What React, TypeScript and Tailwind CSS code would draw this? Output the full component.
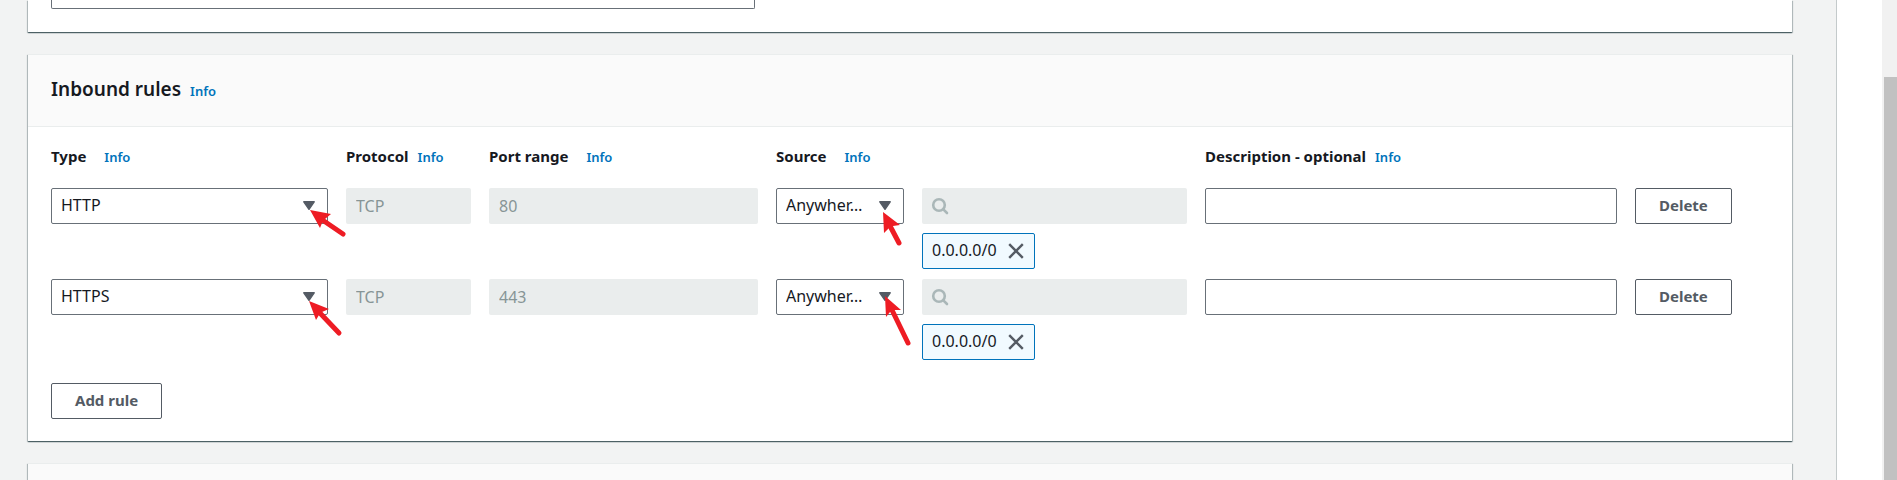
import type { ReactNode } from "react";

type Arrow = { head: string; shaft: string };

type Rule = {
  id: string;
  type: string;
  protocol: string;
  port: string;
  source: string;
  cidr: string;
  typeArrow: Arrow;
  sourceArrow: Arrow;
};

const rules: Rule[] = [
  {
    id: "rule-1",
    type: "HTTP",
    protocol: "TCP",
    port: "80",
    source: "Anywher…",
    cidr: "0.0.0.0/0",
    typeArrow: { head: "M22 22 L43 26 L37 31 L34 35 L32 40 Z", shaft: "M33 31 L55 46" },
    sourceArrow: { head: "M19 24 L36 37 L29 38 L25 40 L20 45 Z", shaft: "M25 36 L35 55" },
  },
  {
    id: "rule-2",
    type: "HTTPS",
    protocol: "TCP",
    port: "443",
    source: "Anywher…",
    cidr: "0.0.0.0/0",
    typeArrow: { head: "M21 22 L41 30 L34 33 L31 36 L28 41 Z", shaft: "M31 33 L51 54" },
    sourceArrow: { head: "M21 17 L37 31 L30 31 L26 33 L22 38 Z", shaft: "M27 29 L44 64" },
  },
];

const columns =
  "grid grid-cols-[277fr_125fr_269fr_128fr_265fr_412fr_134fr] gap-x-[18px]";

function InfoLink() {
  return (
    <a href="#info" className="text-[13px] font-semibold text-[#0073bb]">
      Info
    </a>
  );
}

function Heading({
  id,
  htmlFor,
  wide,
  className,
  children,
}: {
  id: string;
  htmlFor: string;
  wide?: boolean;
  className?: string;
  children: ReactNode;
}) {
  return (
    <div
      className={`flex items-baseline whitespace-nowrap ${wide ? "gap-[18px]" : "gap-[9px]"} ${className ?? ""}`}
    >
      <label id={id} htmlFor={htmlFor} className="text-[15px] leading-6 font-bold">
        {children}
      </label>
      <InfoLink />
    </div>
  );
}

function PointerArrow({ arrow }: { arrow: Arrow }) {
  return (
    <svg
      aria-hidden="true"
      className="pointer-events-none absolute top-0 right-0 z-10 h-9 w-10 overflow-visible"
      viewBox="0 0 40 36"
    >
      <path d={arrow.head} fill="#ee1c24" />
      <path d={arrow.shaft} stroke="#ee1c24" strokeWidth="5" strokeLinecap="round" fill="none" />
    </svg>
  );
}

function Select({
  id,
  labelledBy,
  value,
  arrow,
}: {
  id: string;
  labelledBy: string;
  value: string;
  arrow: Arrow;
}) {
  return (
    <div className="relative h-9">
      <select
        id={id}
        aria-labelledby={labelledBy}
        defaultValue={value}
        className="block h-9 w-full appearance-none rounded-xs border border-[#687078] bg-white pr-8 pb-0.5 pl-[9px]"
      >
        <option>{value}</option>
      </select>
      <svg
        aria-hidden="true"
        className="pointer-events-none absolute top-[13px] right-[13px] h-[9px] w-3"
        viewBox="0 0 12 9"
      >
        <path
          d="M0.8 0.8 H11.2 L6 8.3 Z"
          fill="#545b64"
          stroke="#545b64"
          strokeWidth="1.4"
          strokeLinejoin="round"
        />
      </svg>
      <PointerArrow arrow={arrow} />
    </div>
  );
}

const disabledField =
  "block h-9 w-full min-w-0 rounded-xs bg-[#eaeded] px-2.5 text-[#879596]";

function RuleRow({ rule }: { rule: Rule }) {
  return (
    <div className={columns}>
      <Select
        id={`${rule.id}-type`}
        labelledBy="label-type"
        value={rule.type}
        arrow={rule.typeArrow}
      />
      <input
        id={`${rule.id}-protocol`}
        aria-labelledby="label-protocol"
        className={disabledField}
        defaultValue={rule.protocol}
        disabled
      />
      <input
        id={`${rule.id}-port`}
        aria-labelledby="label-port"
        className={disabledField}
        defaultValue={rule.port}
        disabled
      />
      <Select
        id={`${rule.id}-source`}
        labelledBy="label-source"
        value={rule.source}
        arrow={rule.sourceArrow}
      />
      <div className="flex flex-col items-start gap-[9px]">
        <div className="relative w-full">
          <input
            type="text"
            aria-labelledby="label-source"
            className={disabledField}
            disabled
          />
          <svg
            aria-hidden="true"
            className="pointer-events-none absolute top-[9px] left-[9px] size-[18px]"
            viewBox="0 0 18 18"
            fill="none"
            stroke="#aab7b8"
            strokeWidth="2.6"
            strokeLinecap="round"
          >
            <circle cx="8" cy="8" r="5.8" />
            <path d="M12.3 12.3 L16 16" />
          </svg>
        </div>
        <div className="flex h-9 items-center gap-[11px] rounded-xs border border-[#0073bb] bg-[#f1faff] pr-2.5 pb-0.5 pl-[9px]">
          <span>{rule.cidr}</span>
          <button type="button" aria-label="Remove" className="mt-0.5">
            <svg
              className="block size-4"
              viewBox="0 0 16 16"
              fill="none"
              stroke="#545b64"
              strokeWidth="2.4"
            >
              <path d="M1.2 1.2 L14.8 14.8 M14.8 1.2 L1.2 14.8" />
            </svg>
          </button>
        </div>
      </div>
      <input
        id={`${rule.id}-description`}
        type="text"
        aria-labelledby="label-description"
        className="block h-9 w-full min-w-0 rounded-xs border border-[#687078] bg-white px-[9px]"
      />
      <button
        type="button"
        className="flex h-9 items-center justify-center justify-self-start rounded-xs border border-[#545b64] bg-white px-[23px] pb-0.5 text-[15px] font-bold text-[#545b64]"
      >
        Delete
      </button>
    </div>
  );
}

const cardShadow =
  "shadow-[0_1px_1px_0_rgba(0,28,36,0.5),1px_1px_1px_0_rgba(0,28,36,0.2),-1px_1px_1px_0_rgba(0,28,36,0.2)]";

export default function App() {
  return (
    <div className="flex h-screen overflow-hidden bg-white font-['Noto_Sans','Open_Sans',sans-serif] text-base text-[#16191f]">
      <main className="flex min-w-0 flex-1 flex-col gap-[22px] border-r border-[#c4cacb] bg-[#f2f3f3] pr-11 pl-7">
        <section className={`shrink-0 bg-white px-[23px] pb-[23px] ${cardShadow}`}>
          <input
            type="text"
            aria-label="VPC"
            className="block h-[9px] w-[41%] rounded-b-xs border border-t-0 border-[#687078]"
          />
        </section>

        <section className={`shrink-0 border-t border-[#eaeded] bg-white ${cardShadow}`}>
          <header className="flex h-[72px] items-center border-b border-[#eaeded] bg-[#fafafa] px-[23px]">
            <div className="flex items-baseline gap-[9px] pb-1">
              <h2 className="text-[19px] leading-7 font-semibold">Inbound rules</h2>
              <InfoLink />
            </div>
          </header>
          <div className="px-[23px] pt-[17px] pb-[22px]">
            <div className={`${columns} pb-5`}>
              <Heading id="label-type" htmlFor="rule-1-type" wide>
                Type
              </Heading>
              <Heading id="label-protocol" htmlFor="rule-1-protocol">
                Protocol
              </Heading>
              <Heading id="label-port" htmlFor="rule-1-port" wide>
                Port range
              </Heading>
              <Heading id="label-source" htmlFor="rule-1-source" wide className="col-span-2">
                Source
              </Heading>
              <Heading id="label-description" htmlFor="rule-1-description">
                Description - optional
              </Heading>
            </div>
            <div className="flex flex-col gap-2.5">
              {rules.map((rule) => (
                <RuleRow key={rule.id} rule={rule} />
              ))}
            </div>
            <button
              type="button"
              className="mt-[23px] flex h-9 items-center rounded-xs border border-[#545b64] bg-white px-[23px] pb-0.5 text-[15px] font-bold text-[#545b64]"
            >
              Add rule
            </button>
          </div>
        </section>

        <section className={`shrink-0 border-t border-[#eaeded] bg-white ${cardShadow}`}>
          <div className="h-20 bg-[#fafafa]" />
        </section>
      </main>
      <aside className="w-[45px] shrink-0 bg-white" />
      <div className="w-[15px] shrink-0 bg-[#f1f1f1] pt-[77px] pl-0.5">
        <div className="h-full bg-[#c1c1c1]" />
      </div>
    </div>
  );
}
